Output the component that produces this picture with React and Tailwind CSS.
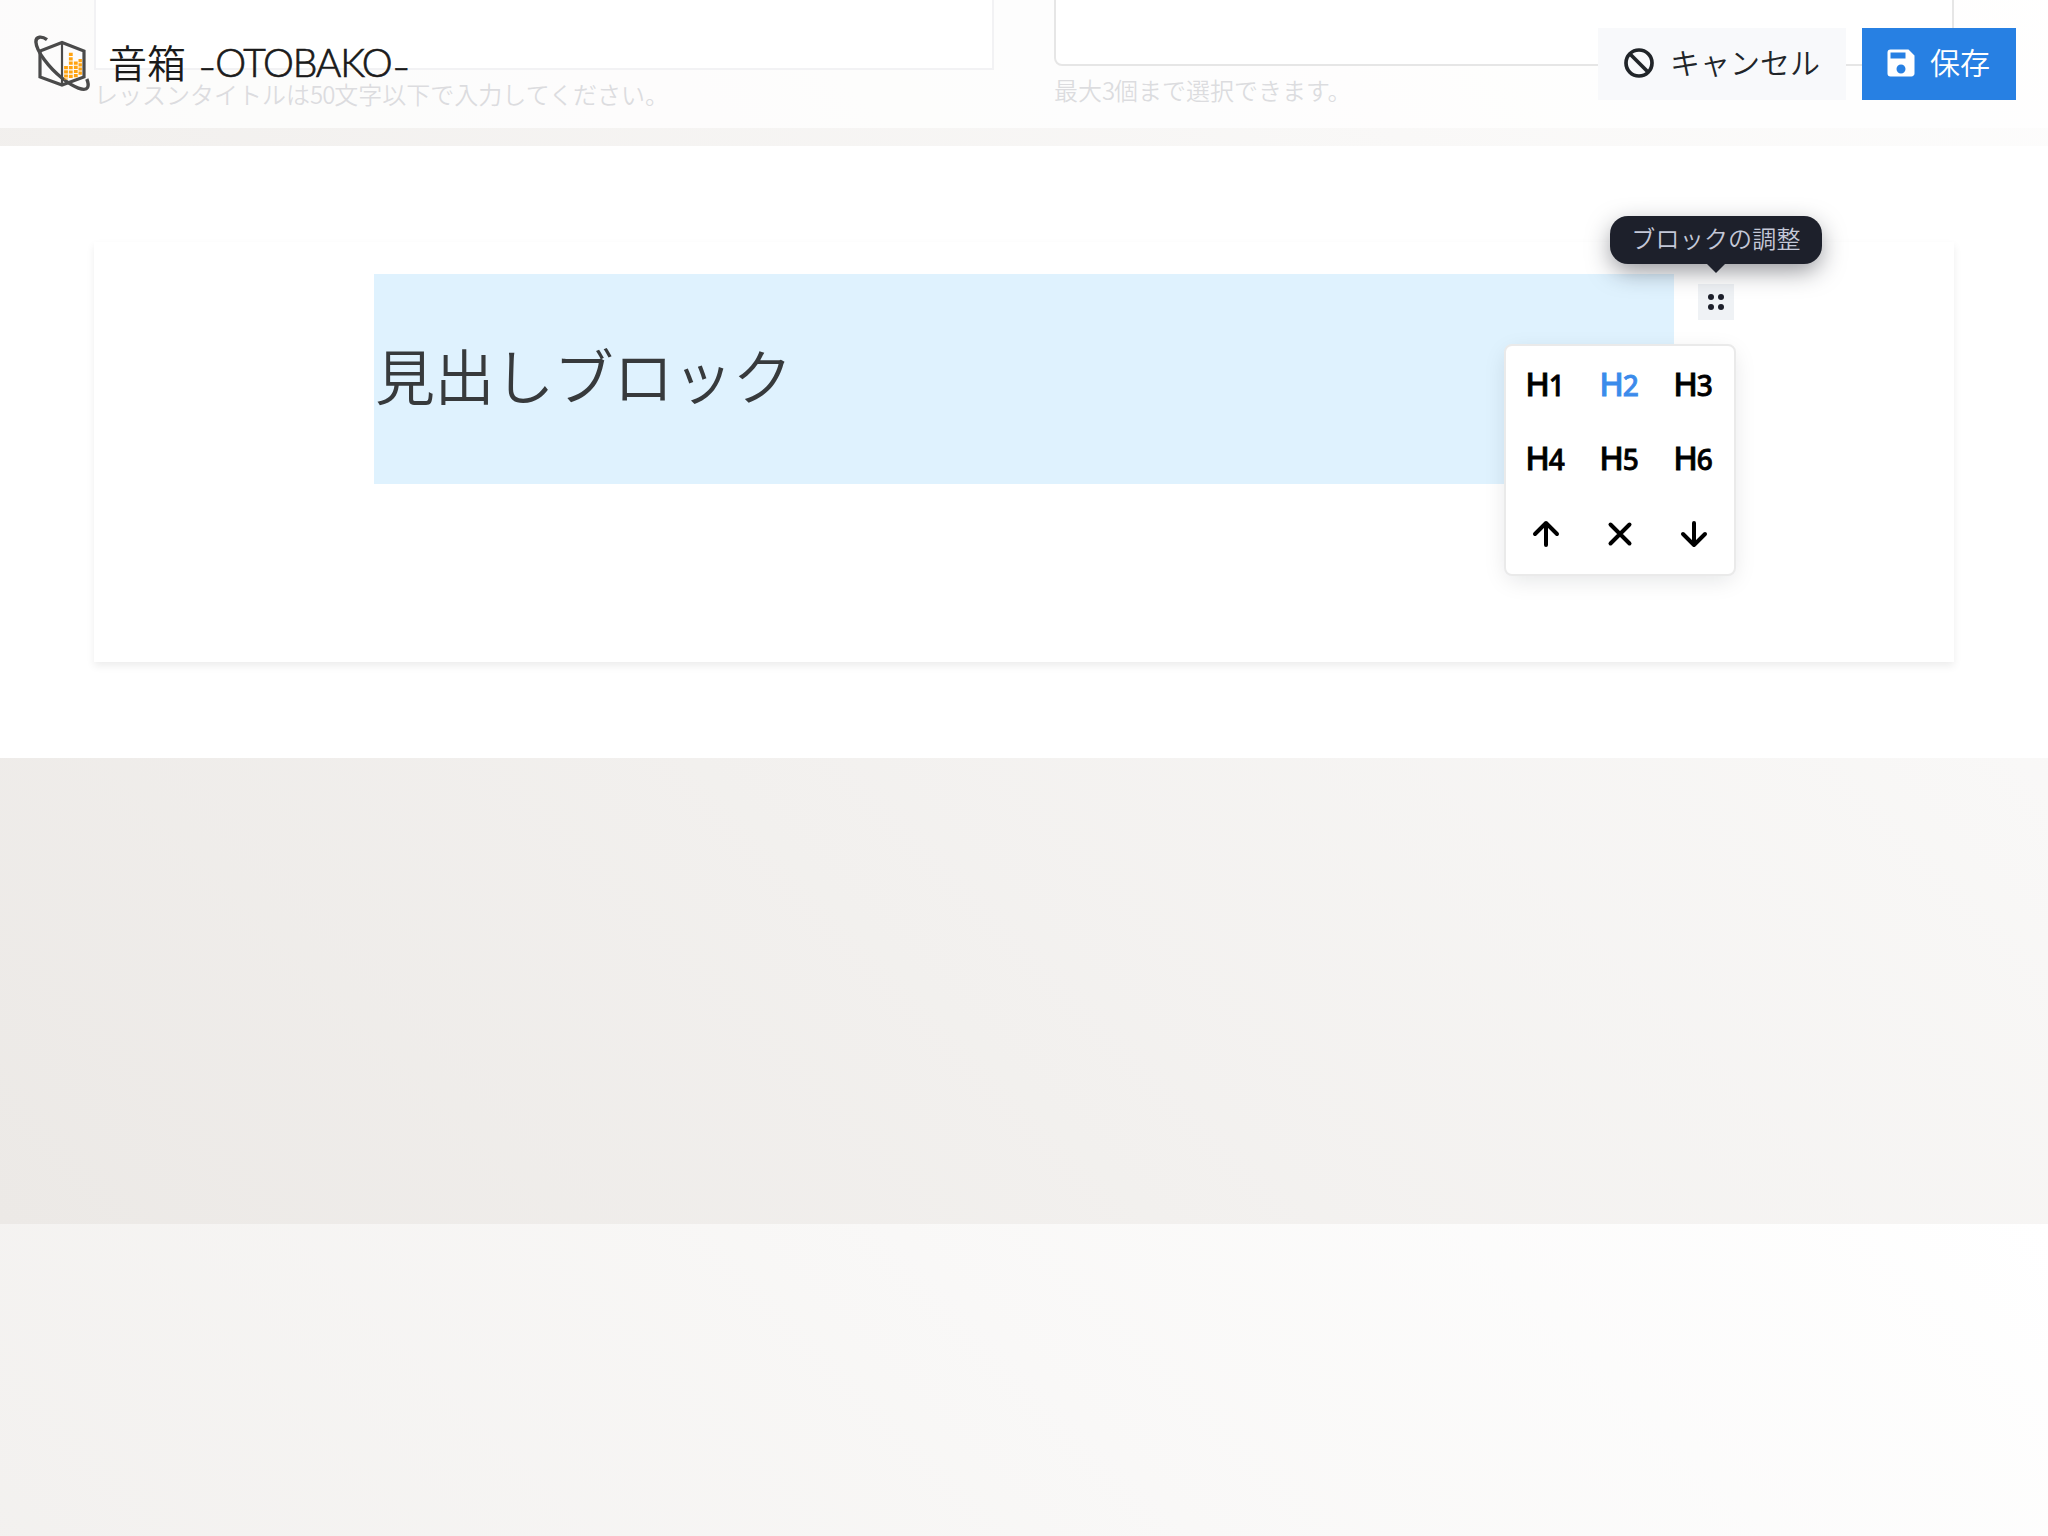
import React from "react";
import { MdSave } from "react-icons/md";

function Logo() {
  return (
    <svg width="84" height="80" viewBox="0 0 84 80" className="shrink-0" fill="none" stroke="#4a4a4a">
      <path d="M42 18.500 L20 27 V53 L42 61 L64 53 V27 Z" strokeWidth="3.200" />
      <path d="M42 18.500 V61" strokeWidth="2.200" />
      <path d="M27 15.600 C22 12 15.600 12 15.900 18 C16.500 27 28 43 42.500 54.500 C54 63.500 65 68 67.600 63.500 C69 61 68 58 66.800 55" strokeWidth="3.400" />
      <g stroke="#ffa310" strokeWidth="3.800">
        <path d="M46 42 V55.500" strokeDasharray="3.200 1" />
        <path d="M50.800 28.800 V55" strokeDasharray="3.200 1.200" />
        <path d="M55.800 37.500 V53.500" strokeDasharray="3.200 1" />
        <path d="M60.200 35 V51.500" strokeDasharray="3.200 1" strokeWidth="3.400" />
      </g>
    </svg>
  );
}

function BanIcon() {
  return (
    <svg width="30" height="30" viewBox="0 0 30 30" fill="none" stroke="currentColor" strokeWidth="3.700">
      <circle cx="15" cy="15" r="13" />
      <path d="M6 6L24 24" />
    </svg>
  );
}

function Heading({ n, active }) {
  return (
    <button
      className={`flex items-baseline justify-center self-center pb-[5px] pr-0.5 font-['Noto_Sans',sans-serif] font-medium leading-none [-webkit-text-stroke:0.800px_currentColor] ${active ? "text-[#3b8beb]" : "text-black"}`}
    >
      <span className="text-[33px]">H</span>
      <span className="-ml-px text-[28px]">{n}</span>
    </button>
  );
}

function Stroke({ d }) {
  return (
    <button className="flex items-center justify-center">
      <svg width="32" height="32" viewBox="0 0 32 32" fill="none" stroke="black" strokeWidth="4" strokeLinecap="round" strokeLinejoin="round">
        <path d={d} />
      </svg>
    </button>
  );
}

function Header() {
  return (
    <header className="absolute inset-x-0 top-0 flex h-32 items-center bg-white/75 pl-5 pr-8">
      <Logo />
      <div className="ml-1 flex items-center text-[39px] leading-none text-[#1a1a1a]">
        <span className="pb-1.5 font-[350]">音箱</span>
        <span className="ml-3.5 flex font-['Lato',sans-serif] text-[39px] font-light tracking-[-1.200px] [-webkit-text-stroke:0.700px_currentColor]">
          <span className="scale-x-125 pt-1">-</span>
          <span className="mx-0.5">OTOBAKO</span>
          <span className="scale-x-125 pt-1">-</span>
        </span>
      </div>
      <div className="ml-auto flex gap-4 text-[30px] font-[350] leading-none">
        <button className="flex h-[72px] w-[248px] items-center bg-[#f8f9fb] pb-0.5 pl-[26px] text-[#212529]">
          <BanIcon />
          <span className="ml-4 pb-1">キャンセル</span>
        </button>
        <button className="flex h-[72px] w-[154px] items-center bg-[#2780e3] pb-0.5 pl-[21px] text-white">
          <MdSave size={36} />
          <span className="ml-[11px] pb-1">保存</span>
        </button>
      </div>
    </header>
  );
}

function LessonForm() {
  return (
    <div className="grid h-[146px] grid-cols-[900px_900px] gap-x-[60px] px-[94px] text-2xl font-[350] leading-none text-[#737680]">
      <div>
        <div className="h-[70px] border-2 border-t-0 border-[#c9cad2] bg-white" />
        <p className="mt-3">レッスンタイトルは<span className="tracking-[-1px]">50</span>文字以下で入力してください。</p>
      </div>
      <div>
        <div className="-mt-2 h-[74px] rounded-lg border-2 border-[#9c9c9c] bg-white" />
        <p className="mt-3">最大<span className="tracking-[-1.300px]">3</span>個まで選択できます。</p>
      </div>
    </div>
  );
}

function BlockMenu() {
  return (
    <div className="absolute right-0 top-[60px] grid h-[232px] w-[232px] grid-cols-3 grid-rows-3 rounded-lg border-2 border-[#eaeaea] bg-white p-[3px] shadow-[0_6px_24px_-4px_rgba(13,20,33,0.13)]">
      <Heading n="1" />
      <Heading n="2" active />
      <Heading n="3" />
      <Heading n="4" />
      <Heading n="5" />
      <Heading n="6" />
      <Stroke d="M16 27V5M5 16L16 5L27 16" />
      <Stroke d="M6.500 6.500L25.500 25.500M25.500 6.500L6.500 25.500" />
      <Stroke d="M16 5V27M5 16L16 27L27 16" />
    </div>
  );
}

function Tooltip() {
  return (
    <div className="absolute bottom-[56px] left-1/2 flex h-12 w-[212px] -translate-x-1/2 items-center justify-center rounded-[18px] bg-[#1d202b] pb-[5px] text-2xl font-[350] leading-none tracking-[0.200px] text-[#c4c8d8] shadow-[0_8px_24px_-2px_rgba(29,32,43,0.5)]">
      ブロックの調整
      <svg width="20" height="10" viewBox="0 0 20 10" className="absolute left-24 top-[47px]">
        <path d="M0 0H20L10 10Z" fill="#1d202b" />
      </svg>
    </div>
  );
}

function BlockToolbar() {
  return (
    <div className="relative mt-[42px] ml-6 h-9 w-9">
      <div className="flex h-9 w-9 items-center justify-center bg-[#eff2f5]">
        <svg width="16" height="16" viewBox="0 0 16 16" fill="#1d202b">
          <circle cx="3" cy="3" r="3" />
          <circle cx="13" cy="3" r="3" />
          <circle cx="3" cy="13" r="3" />
          <circle cx="13" cy="13" r="3" />
        </svg>
      </div>
      <Tooltip />
      <div className="absolute right-[-2px] top-0">
        <BlockMenu />
      </div>
    </div>
  );
}

export default function App() {
  return (
    <div className="relative h-[1536px] w-[2048px] overflow-hidden bg-[linear-gradient(45deg,#ece9e6,#ffffff)] bg-[length:2048px_1600px] bg-[position:0_1224px] font-['Noto_Sans_CJK_JP',sans-serif]">
      <LessonForm />
      <main className="h-[612px] bg-white px-[94px] pt-24">
        <section className="flex h-[420px] items-start bg-white pl-[280px] shadow-[0_4px_8px_rgba(0,0,0,0.075)]">
          <h2 className="mt-8 flex h-[210px] w-[1300px] items-center bg-sky-100 pb-[11px] pl-px text-[60px] font-[350] leading-none tracking-[-0.400px] text-[#373a3c]">
            見出しブロック
          </h2>
          <BlockToolbar />
        </section>
      </main>
      <Header />
    </div>
  );
}
